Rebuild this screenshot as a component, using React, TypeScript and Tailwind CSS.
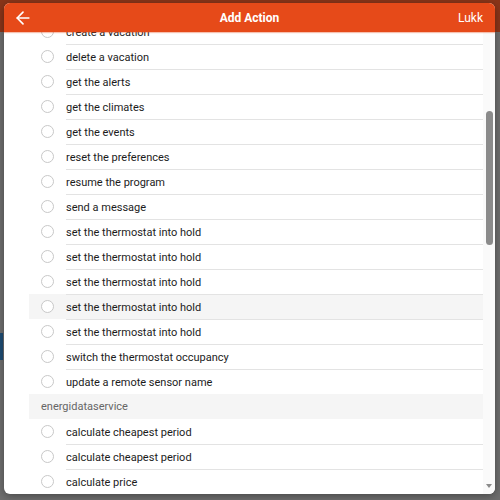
import { ArrowLeft } from 'lucide-react';

type Group = {
  title?: string;
  items: { label: string; hover?: boolean }[];
};

const groups: Group[] = [
  {
    items: [
      { label: 'create a vacation' },
      { label: 'delete a vacation' },
      { label: 'get the alerts' },
      { label: 'get the climates' },
      { label: 'get the events' },
      { label: 'reset the preferences' },
      { label: 'resume the program' },
      { label: 'send a message' },
      { label: 'set the thermostat into hold' },
      { label: 'set the thermostat into hold' },
      { label: 'set the thermostat into hold' },
      { label: 'set the thermostat into hold', hover: true },
      { label: 'set the thermostat into hold' },
      { label: 'switch the thermostat occupancy' },
      { label: 'update a remote sensor name' },
    ],
  },
  {
    title: 'energidataservice',
    items: [
      { label: 'calculate cheapest period' },
      { label: 'calculate cheapest period' },
      { label: 'calculate price' },
    ],
  },
];

function ActionRow({ label, hover, first }: { label: string; hover?: boolean; first: boolean }) {
  return (
    <div className={`flex h-[25px] items-stretch ${hover ? 'bg-[#f5f5f5]' : ''}`}>
      <div className="flex w-[37px] shrink-0 items-center pl-[12px]">
        <span className="block h-[13px] w-[13px] rounded-full border border-[#c8c8c8] bg-white" />
      </div>
      <div
        className={`flex flex-1 items-center pt-[3px] text-[11px] text-[#1c1c1c] ${
          first ? '' : 'border-t border-[#e3e3e3]'
        }`}
      >
        {label}
      </div>
    </div>
  );
}

export default function App() {
  return (
    <div
      className="relative h-[500px] w-[500px] overflow-hidden bg-[#6e6e6e]"
      style={{ fontFamily: 'Roboto, "Open Sans", sans-serif' }}
    >
      {/* Page behind the dialog */}
      <div className="h-[32px] bg-[#8a3519]" />
      <div className="flex">
        <div className="mt-[301px] h-[27px] w-[3px] bg-[#1f4d74]" />
      </div>
      <div className="ml-[70px] mt-[101px] text-[24px] font-bold leading-none text-[#1b1b1b]">
        But only if
      </div>

      {/* Dialog */}
      <div className="absolute left-[4px] top-[3px] flex h-[491px] w-[491px] flex-col overflow-hidden rounded-[6px] bg-white shadow-[0_2px_8px_rgba(0,0,0,0.35)]">
        <div className="relative z-10 grid h-[29px] shrink-0 grid-cols-[1fr_auto_1fr] items-center bg-[#e64a19] text-white shadow-[0_1px_1px_rgba(230,74,25,0.35)]">
          <div className="flex items-center pl-[9px]">
            <ArrowLeft size={20} strokeWidth={2} />
          </div>
          <div className="pt-[1px] text-[12px] font-bold">Add Action</div>
          <div className="pr-[12px] pt-[1px] text-right text-[12px]">Lukk</div>
        </div>

        <div className="flex min-h-0 flex-1">
          <div className="min-h-0 flex-1 overflow-hidden">
            <div className="-mt-[13px] ml-[25px]">
              {groups.map((g, gi) => (
                <div key={gi}>
                  {g.title && (
                    <div className="flex h-[25px] items-center bg-[#f5f5f5] pl-[12px] pt-[2px] text-[11px] text-[#666]">
                      {g.title}
                    </div>
                  )}
                  {g.items.map((it, i) => (
                    <ActionRow key={i} label={it.label} hover={it.hover} first={i === 0} />
                  ))}
                </div>
              ))}
            </div>
          </div>

          {/* Scrollbar */}
          <div className="flex w-[12px] shrink-0 flex-col bg-[#fafafa]">
            <div className="ml-[3px] mt-[79px] h-[134px] w-[7px] rounded-full bg-[#8b8b8b]" />
            <div className="mb-[6px] ml-[3px] mt-auto h-0 w-0 border-x-[3.5px] border-t-[4px] border-x-transparent border-t-[#8b8b8b]" />
          </div>
        </div>
      </div>
    </div>
  );
}
